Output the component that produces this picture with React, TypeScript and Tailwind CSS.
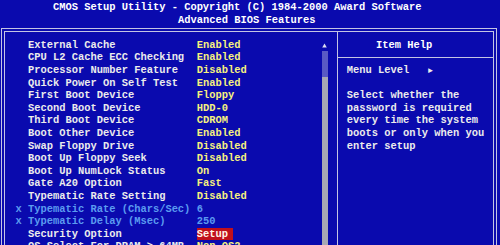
type Row = { label: string; value: string; kind?: "off" | "sel" };

const ROWS: Row[] = [
  { label: "External Cache", value: "Enabled" },
  { label: "CPU L2 Cache ECC Checking", value: "Enabled" },
  { label: "Processor Number Feature", value: "Disabled" },
  { label: "Quick Power On Self Test", value: "Enabled" },
  { label: "First Boot Device", value: "Floppy" },
  { label: "Second Boot Device", value: "HDD-0" },
  { label: "Third Boot Device", value: "CDROM" },
  { label: "Boot Other Device", value: "Enabled" },
  { label: "Swap Floppy Drive", value: "Disabled" },
  { label: "Boot Up Floppy Seek", value: "Disabled" },
  { label: "Boot Up NumLock Status", value: "On" },
  { label: "Gate A20 Option", value: "Fast" },
  { label: "Typematic Rate Setting", value: "Disabled" },
  { label: "Typematic Rate (Chars/Sec)", value: "6", kind: "off" },
  { label: "Typematic Delay (Msec)", value: "250", kind: "off" },
  { label: "Security Option", value: "Setup", kind: "sel" },
  { label: "OS Select For DRAM > 64MB", value: "Non-OS2" },
];

const HELP = [
  "Select whether the",
  "password is required",
  "every time the system",
  "boots or only when you",
  "enter setup",
];

function SetupRow({ row }: { row: Row }) {
  const off = row.kind === "off";
  return (
    <div className="flex h-[12.6px] leading-[12.6px] whitespace-pre">
      <span className="w-[12.5px] shrink-0 text-[#5b9bf0]">{off ? "x" : ""}</span>
      <span className={`w-[168.75px] shrink-0 ${off ? "text-[#5b9bf0]" : "text-[#ececec]"}`}>
        {row.label}
      </span>
      {row.kind === "sel" ? (
        <span className="bg-[#c0101c] text-[#fff4e8] pr-[5px]">{row.value}</span>
      ) : (
        <span className={off ? "text-[#5b9bf0]" : "text-[#f6f27e]"}>{row.value}</span>
      )}
    </div>
  );
}

export default function App() {
  return (
    <div
      className="w-[500px] h-[245px] overflow-hidden bg-[#0a0aae] font-bold text-[10.42px]"
      style={{ fontFamily: '"Liberation Mono", "DejaVu Sans Mono", monospace' }}
    >
      {/* title */}
      <div className="h-[28px] pt-[1px] text-white whitespace-pre leading-[12.6px]">
        <div className="pl-[53px]">CMOS Setup Utility - Copyright (C) 1984-2000 Award Software</div>
        <div className="pl-[178px]">Advanced BIOS Features</div>
      </div>

      {/* double frame */}
      <div className="ml-[1px] w-[496px] h-[240px] border border-[#c4c4e4] p-[2px]">
        <div className="h-full border border-[#c4c4e4] flex">
          {/* items */}
          <div className="w-[316.75px] shrink-0 pt-[6.8px] pl-[10.5px]">
            {ROWS.map((r) => (
              <SetupRow key={r.label} row={r} />
            ))}
          </div>

          {/* scroll bar */}
          <div className="w-[6.25px] shrink-0 pt-[6.8px] flex flex-col">
            <div className="h-[12.6px] flex items-center justify-center">
              <svg width="5" height="5" viewBox="0 0 5 5">
                <path d="M2.5 0.5 L4.8 4.5 L0.2 4.5 Z" fill="#dcdcf0" />
              </svg>
            </div>
            <div className="h-[25.2px] bg-[#5a5ac4]" />
            <div className="flex-1 bg-[#a8a8b4]" />
          </div>

          <div className="w-[9px] shrink-0" />

          {/* help panel */}
          <div className="flex-1 border-l border-[#c4c4e4] text-[#ececec] whitespace-pre leading-[12.6px]">
            <div className="pt-[6.8px] pb-[5.6px] border-b border-[#c4c4e4] pl-[38px] text-white">
              <div className="h-[12.6px]">Item Help</div>
            </div>
            <div className="pt-[6px] pl-[8.75px]">
              <div className="h-[12.6px]">
                Menu Level   <span className="text-[8px]">►</span>
              </div>
              <div className="h-[12.6px]" />
              {HELP.map((l) => (
                <div key={l} className="h-[12.6px]">
                  {l}
                </div>
              ))}
            </div>
          </div>
        </div>
      </div>
    </div>
  );
}
